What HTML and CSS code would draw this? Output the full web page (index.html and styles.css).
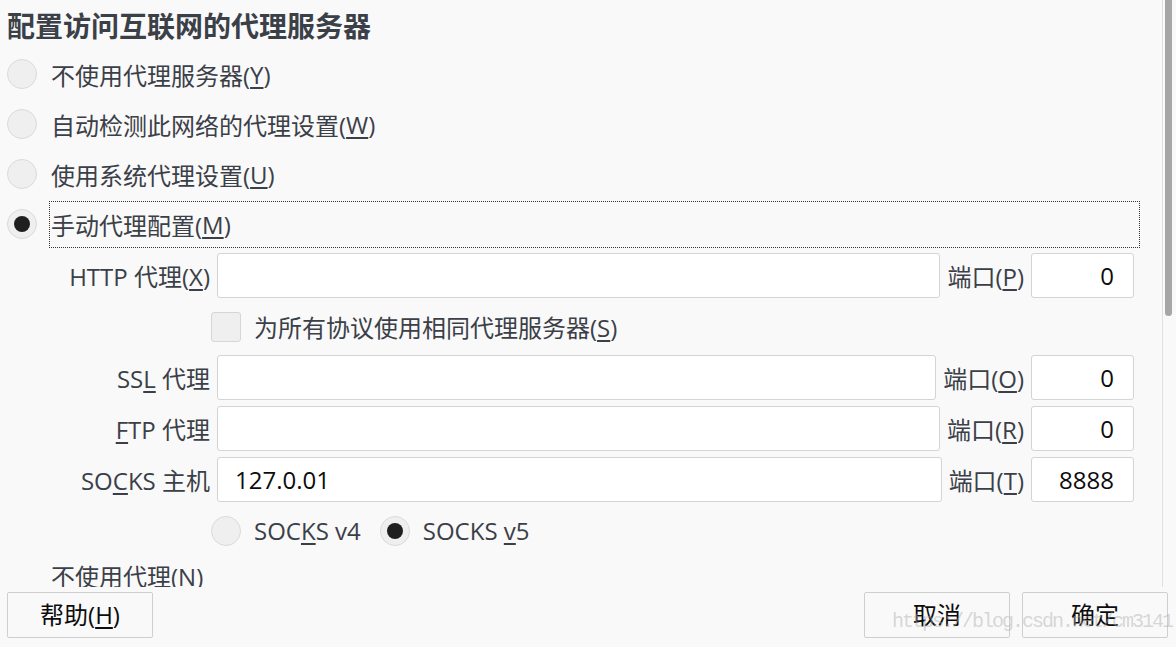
FILE: index.html
```html
<!DOCTYPE html>
<html lang="zh-CN">
<head>
<meta charset="utf-8">
<title>连接设置</title>
<link rel="stylesheet" href="styles.css">
</head>
<body>
<div class="window">
  <div class="scroller">
    <div class="content">
      <h1 class="title">配置访问互联网的代理服务器</h1>
      <div class="choice"><span class="radio"></span><span class="choice-label">不使用代理服务器(<u>Y</u>)</span></div>
      <div class="choice"><span class="radio"></span><span class="choice-label">自动检测此网络的代理设置(<u>W</u>)</span></div>
      <div class="choice"><span class="radio"></span><span class="choice-label">使用系统代理设置(<u>U</u>)</span></div>
      <div class="choice"><span class="radio checked"></span><span class="choice-label focused">手动代理配置(<u>M</u>)</span></div>

      <div class="proxy-rows">
        <div class="proxy-row">
          <span class="field-label">HTTP 代理(<u>X</u>)</span>
          <span class="textbox"></span>
          <span class="port-label">端口(<u>P</u>)</span>
          <span class="textbox port">0</span>
        </div>
        <div class="check-row">
          <span class="checkbox"></span>
          <span class="check-label">为所有协议使用相同代理服务器(<u>S</u>)</span>
        </div>
        <div class="proxy-row">
          <span class="field-label">SS<u>L</u> 代理</span>
          <span class="textbox"></span>
          <span class="port-label">端口(<u>O</u>)</span>
          <span class="textbox port">0</span>
        </div>
        <div class="proxy-row">
          <span class="field-label"><u>F</u>TP 代理</span>
          <span class="textbox"></span>
          <span class="port-label">端口(<u>R</u>)</span>
          <span class="textbox port">0</span>
        </div>
        <div class="proxy-row">
          <span class="field-label">SO<u>C</u>KS 主机</span>
          <span class="textbox value">127.0.01</span>
          <span class="port-label">端口(<u>T</u>)</span>
          <span class="textbox port">8888</span>
        </div>
        <div class="socks-row">
          <span class="radio"></span><span class="socks-label">SOC<u>K</u>S v4</span>
          <span class="radio checked"></span><span class="socks-label">SOCKS <u>v</u>5</span>
        </div>
      </div>
      <div class="noproxy">不使用代理(N)</div>
    </div>
    <div class="scrollbar"><div class="thumb"></div></div>
  </div>
  <div class="footer">
    <button class="btn">帮助(<u>H</u>)</button>
    <div class="btn-group">
      <button class="btn">取消</button>
      <button class="btn">确定</button>
    </div>
  </div>
  <div class="watermark">https://blog.csdn.net/cm3141</div>
</div>
</body>
</html>
```

FILE: styles.css
```css
html, body {
  margin: 0;
  padding: 0;
  background: #f9f9f9;
  overflow: hidden;
}
body {
  font-family: "Open Sans", "Noto Sans CJK SC", sans-serif;
  color: #3b4048;
  font-size: 24px;
}
u {
  text-decoration: underline;
  text-underline-offset: 3px;
  text-decoration-thickness: 2px;
}
.window {
  position: relative;
  width: 1176px;
  height: 647px;
}
.scroller {
  display: flex;
  height: 587px;
  overflow: hidden;
}
.content {
  width: 1155px;
  padding-left: 7px;
}
.title {
  margin: 0;
  height: 49px;
  padding-top: 0;
  box-sizing: border-box;
  display: flex;
  align-items: center;
  font-size: 28px;
  font-weight: bold;
  font-family: "Noto Sans CJK SC", sans-serif;
  color: #3b4048;
}
.choice {
  display: flex;
  align-items: center;
  height: 50px;
  gap: 12px;
}
.radio {
  width: 28px;
  height: 28px;
  border: 1px solid #dadada;
  border-radius: 50%;
  background: #efefef;
  flex: none;
  display: flex;
  align-items: center;
  justify-content: center;
}
.radio.checked::after {
  content: "";
  width: 16px;
  height: 16px;
  border-radius: 50%;
  background: #1f1f1f;
}
.choice-label {
  display: flex;
  align-items: center;
  height: 45px;
  padding-left: 1px;
  border: 1px dotted transparent;
}
.choice-label.focused {
  border-color: #333;
  width: 1088px;
}
.proxy-rows {
  margin-top: 4px;
  display: flex;
  flex-direction: column;
  gap: 6px;
  width: 1127px;
}
.proxy-row {
  display: flex;
  align-items: center;
  height: 45px;
}
.field-label {
  width: 203px;
  text-align: right;
  flex: none;
  margin-right: 7px;
}
.textbox {
  flex: 1;
  height: 43px;
  background: #fff;
  border: 1px solid #d4d4d4;
  border-radius: 3px;
  display: flex;
  align-items: center;
  color: #0c0c0d;
  box-sizing: content-box;
}
.textbox.value {
  padding-left: 17px;
}
.port-label {
  margin: 0 7px 0 7px;
  flex: none;
}
.textbox.port {
  flex: none;
  width: 82px;
  justify-content: flex-end;
  padding-right: 19px;
}
.check-row {
  display: flex;
  align-items: center;
  height: 45px;
  padding-left: 204px;
  gap: 13px;
}
.checkbox {
  width: 28px;
  height: 28px;
  border: 1px solid #d6d6d6;
  border-radius: 3px;
  background: #efefef;
}
.socks-row {
  display: flex;
  align-items: center;
  height: 45px;
  padding-left: 204px;
}
.socks-label {
  margin-left: 13px;
  margin-right: 19px;
}
.noproxy {
  margin-top: 6px;
  height: 36px;
  line-height: 36px;
  padding-left: 44px;
}
.scrollbar {
  flex: none;
  width: 13px;
  border-left: 1px solid #e0e0e0;
  padding-left: 2px;
  box-sizing: border-box;
}
.thumb {
  width: 7px;
  height: 316px;
  background: #a6a6a6;
  border-radius: 0 0 4px 4px;
}
.footer {
  display: flex;
  justify-content: space-between;
  padding: 5px 8px 0 7px;
}
.btn-group {
  display: flex;
  gap: 12px;
}
.btn {
  width: 146px;
  height: 46px;
  background: #f9f9f9;
  border: 1px solid #cfcfcf;
  border-radius: 2px;
  font-family: "Open Sans", "Noto Sans CJK SC", sans-serif;
  font-size: 24px;
  color: #0c0c0d;
  padding: 0 0 4px;
}
.watermark {
  position: absolute;
  left: 892px;
  top: 610px;
  font-family: "Liberation Mono", monospace;
  font-size: 20px;
  letter-spacing: -2px;
  color: rgba(170, 170, 170, 0.45);
  pointer-events: none;
}
```
